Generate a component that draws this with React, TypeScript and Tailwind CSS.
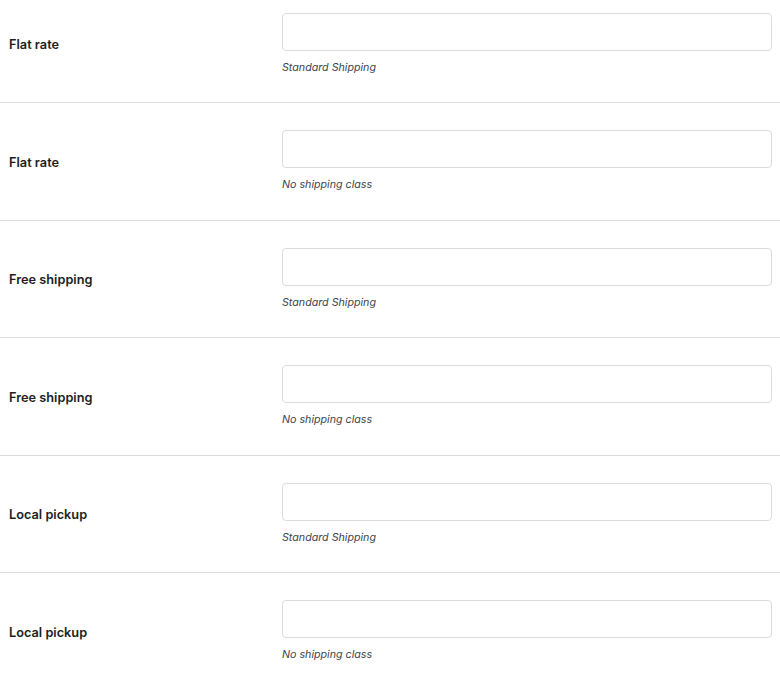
const rows = [
  { method: "Flat rate", shippingClass: "Standard Shipping" },
  { method: "Flat rate", shippingClass: "No shipping class" },
  { method: "Free shipping", shippingClass: "Standard Shipping" },
  { method: "Free shipping", shippingClass: "No shipping class" },
  { method: "Local pickup", shippingClass: "Standard Shipping" },
  { method: "Local pickup", shippingClass: "No shipping class" },
];

export default function App() {
  return (
    <div className="bg-white min-h-[685px] overflow-hidden font-['Inter','Liberation_Sans',sans-serif]">
      <div className="-mt-[14.5px]">
        {rows.map((row, i) => (
          <div
            key={i}
            className={
              i === 0
                ? "flex items-center pt-[27px] pb-[26.5px] pl-[9px] pr-[8px]"
                : "flex items-center border-t border-[#dcdcde] pt-[27px] pb-[26.5px] pl-[9px] pr-[8px]"
            }
          >
            {/* 배송 방법 */}
            <div className="w-[273px] shrink-0 pt-[2px] text-[12.75px] font-semibold text-[#1e1e1e]">
              {row.method}
            </div>

            {/* 입력 + 클래스 */}
            <div className="flex-1 flex flex-col gap-[9px]">
              <input
                type="text"
                className="h-[38px] w-full rounded-[4px] border border-[#dcdcde] bg-white px-3 text-[13px] outline-none"
              />
              <p className="text-[10.7px] italic leading-[16px] text-[#3c434a]">
                {row.shippingClass}
              </p>
            </div>
          </div>
        ))}
      </div>
    </div>
  );
}
